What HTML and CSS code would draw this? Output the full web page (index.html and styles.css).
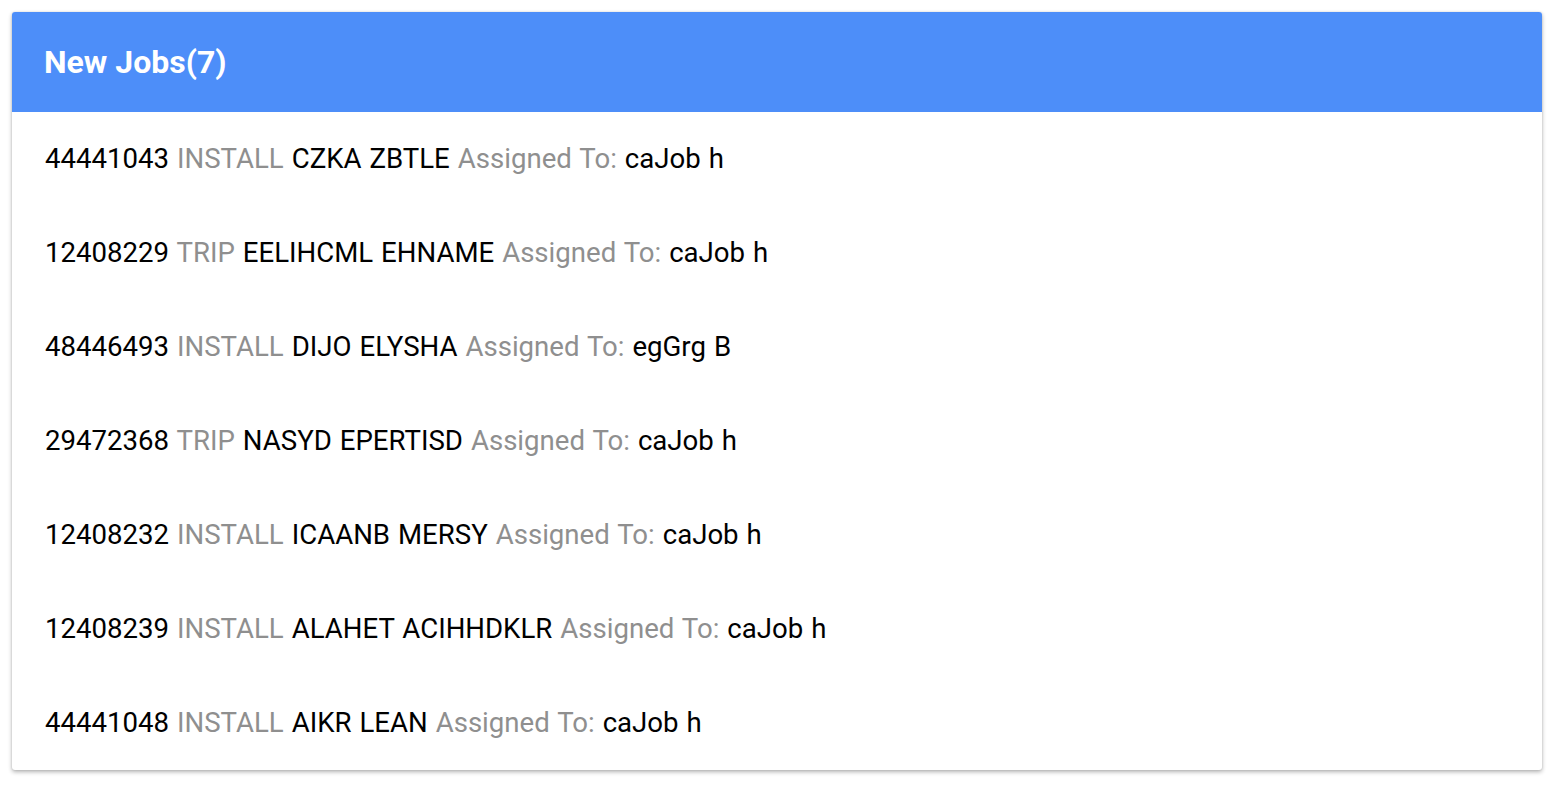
FILE: index.html
```html
<!DOCTYPE html>
<html>
<head>
<meta charset="utf-8">
<link rel="stylesheet" href="styles.css">
</head>
<body>
<div class="card">
  <div class="card-header">New Jobs(7)</div>
  <ul class="jobs">
    <li class="job"><span class="num">44441043</span> <span class="muted">INSTALL</span> <span>CZKA ZBTLE</span> <span class="muted">Assigned To:</span> <span>caJob h</span></li>
    <li class="job"><span class="num">12408229</span> <span class="muted">TRIP</span> <span>EELIHCML EHNAME</span> <span class="muted">Assigned To:</span> <span>caJob h</span></li>
    <li class="job"><span class="num">48446493</span> <span class="muted">INSTALL</span> <span>DIJO ELYSHA</span> <span class="muted">Assigned To:</span> <span>egGrg B</span></li>
    <li class="job"><span class="num">29472368</span> <span class="muted">TRIP</span> <span>NASYD EPERTISD</span> <span class="muted">Assigned To:</span> <span>caJob h</span></li>
    <li class="job"><span class="num">12408232</span> <span class="muted">INSTALL</span> <span>ICAANB MERSY</span> <span class="muted">Assigned To:</span> <span>caJob h</span></li>
    <li class="job"><span class="num">12408239</span> <span class="muted">INSTALL</span> <span>ALAHET ACIHHDKLR</span> <span class="muted">Assigned To:</span> <span>caJob h</span></li>
    <li class="job"><span class="num">44441048</span> <span class="muted">INSTALL</span> <span>AIKR LEAN</span> <span class="muted">Assigned To:</span> <span>caJob h</span></li>
  </ul>
</div>
</body>
</html>
```
FILE: styles.css
```css
html, body {
  margin: 0;
  padding: 0;
  background: #ffffff;
}
body {
  padding: 12px 10px 12px 12px;
  font-family: Roboto, "Liberation Sans", sans-serif;
}
.card {
  width: 1530px;
  background: #ffffff;
  border-radius: 3px;
  overflow: hidden;
  box-shadow: 0 2px 4px rgba(0,0,0,0.3), 0 0 2px rgba(0,0,0,0.12);
}
.card-header {
  height: 100px;
  background: #4d8ef9;
  color: #ffffff;
  font-weight: 700;
  font-size: 32px;
  line-height: 100px;
  padding: 0 32px;
  box-sizing: border-box;
}
.jobs {
  list-style: none;
  margin: 0;
  padding: 0;
}
.job {
  height: 94px;
  line-height: 94px;
  padding: 0 33px;
  font-size: 27.6px;
  word-spacing: 1.1px;
  color: #000000;
  white-space: nowrap;
}
.muted {
  color: #8f8f8f;
}
```
